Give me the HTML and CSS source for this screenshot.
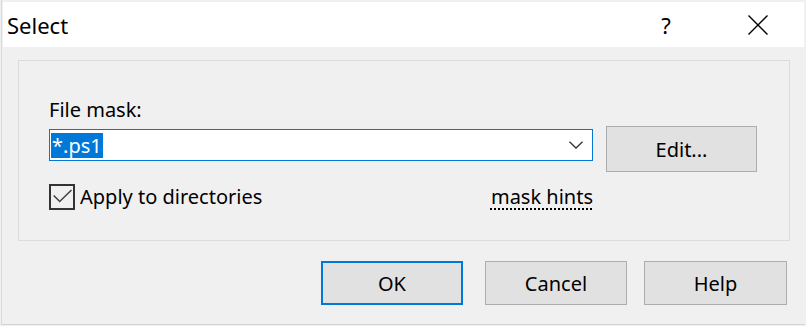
FILE: index.html
```html
<!DOCTYPE html>
<html lang="en">
<head>
  <meta charset="UTF-8">
  <title>Select</title>
  <link rel="stylesheet" href="styles.css">
</head>
<body>
  <div class="window">
    <div class="titlebar">
      <span class="title">Select</span>
      <div class="caption">
        <span class="caption-btn help">?</span>
        <span class="caption-btn close">
          <svg width="20" height="20" viewBox="0 0 20 20">
            <path d="M0.5 0.5 L19.5 19.5 M19.5 0.5 L0.5 19.5" stroke="#000" stroke-width="1.4" fill="none"/>
          </svg>
        </span>
      </div>
    </div>

    <div class="group">
      <div class="label">File mask:</div>
      <div class="mask-row">
        <div class="combo">
          <span class="selected">*.ps1</span>
          <svg class="chevron" width="14" height="8" viewBox="0 0 14 8">
            <path d="M0.5 0.8 L7 7 L13.5 0.8" stroke="#333" stroke-width="1.3" fill="none"/>
          </svg>
        </div>
        <button class="btn edit">Edit...</button>
      </div>
      <div class="options-row">
        <label class="check">
          <span class="box">
            <svg width="22" height="22" viewBox="0 0 22 22">
              <path d="M2.7 9.5 L8.7 15.5 L20.5 4" stroke="#444" stroke-width="1.6" fill="none"/>
            </svg>
          </span>
          Apply to directories
        </label>
        <span class="hints">mask hints</span>
      </div>
    </div>

    <div class="btn-row">
      <button class="btn default">OK</button>
      <button class="btn cancel">Cancel</button>
      <button class="btn help-btn">Help</button>
    </div>
  </div>
</body>
</html>
```

FILE: styles.css
```css
body {
    margin: 0;
    background-color: #f0f0f0;
    font-family: "Noto Sans", "Open Sans", sans-serif;
    font-size: 20px;
    color: #000;
}
.window {
    width: 804px;
    height: 325px;
    margin-left: 1px;
    padding: 2px 0 0 1px;
    border-left: 1px solid #dadada;
    border-bottom: 1px solid #d4d4d4;
    box-sizing: border-box;
}
.titlebar {
    height: 45px;
    margin-right: 1px;
    background-color: #ffffff;
    display: flex;
    align-items: center;
    justify-content: space-between;
}
.title {
    padding-left: 4px;
    font-size: 22px;
}
.caption {
    display: flex;
    height: 100%;
}
.caption-btn {
    width: 92px;
    display: flex;
    align-items: center;
    justify-content: center;
}
.help {
    font-size: 22px;
}
.group {
    margin: 13px 15px 0 15px;
    height: 181px;
    border: 1px solid #dcdcdc;
    box-sizing: border-box;
    padding: 37px 0 0 30px;
}
.label {
    line-height: 24px;
}
.mask-row {
    display: flex;
    align-items: flex-start;
    margin-top: 4px;
}
.combo {
    width: 544px;
    height: 32px;
    margin-top: 3px;
    box-sizing: border-box;
    border: 1px solid #0078d7;
    background-color: #fff;
    display: flex;
    align-items: center;
    justify-content: space-between;
    padding: 0 9px 0 1px;
}
.selected {
    background-color: #0078d7;
    color: #fff;
    line-height: 25px;
    height: 25px;
    padding: 0 1px;
}
.btn {
    font-family: inherit;
    font-size: 20px;
    color: #000;
    background-color: #e1e1e1;
    border: 1px solid #adadad;
    height: 46px;
    width: 151px;
    padding: 0;
}
.edit {
    margin-left: 13px;
}
.options-row {
    width: 544px;
    margin-top: 12px;
    display: flex;
    align-items: center;
    justify-content: space-between;
    line-height: 24px;
}
.check {
    display: flex;
    align-items: center;
}
.box {
    width: 26px;
    height: 26px;
    box-sizing: border-box;
    border: 2px solid #333;
    margin-right: 5px;
    display: flex;
}
.box svg {
    display: block;
}
.hints {
    text-decoration: underline dotted;
    text-underline-offset: 4px;
}
.btn-row {
    display: flex;
    justify-content: flex-end;
    margin: 20px 18px 0 0;
}
.btn-row .btn {
    width: 142px;
    height: 44px;
}
.default {
    border: 2px solid #0078d7;
}
.cancel {
    margin-left: 22px;
}
.btn-row .help-btn {
    margin-left: 17px;
    width: 143px;
}
```
